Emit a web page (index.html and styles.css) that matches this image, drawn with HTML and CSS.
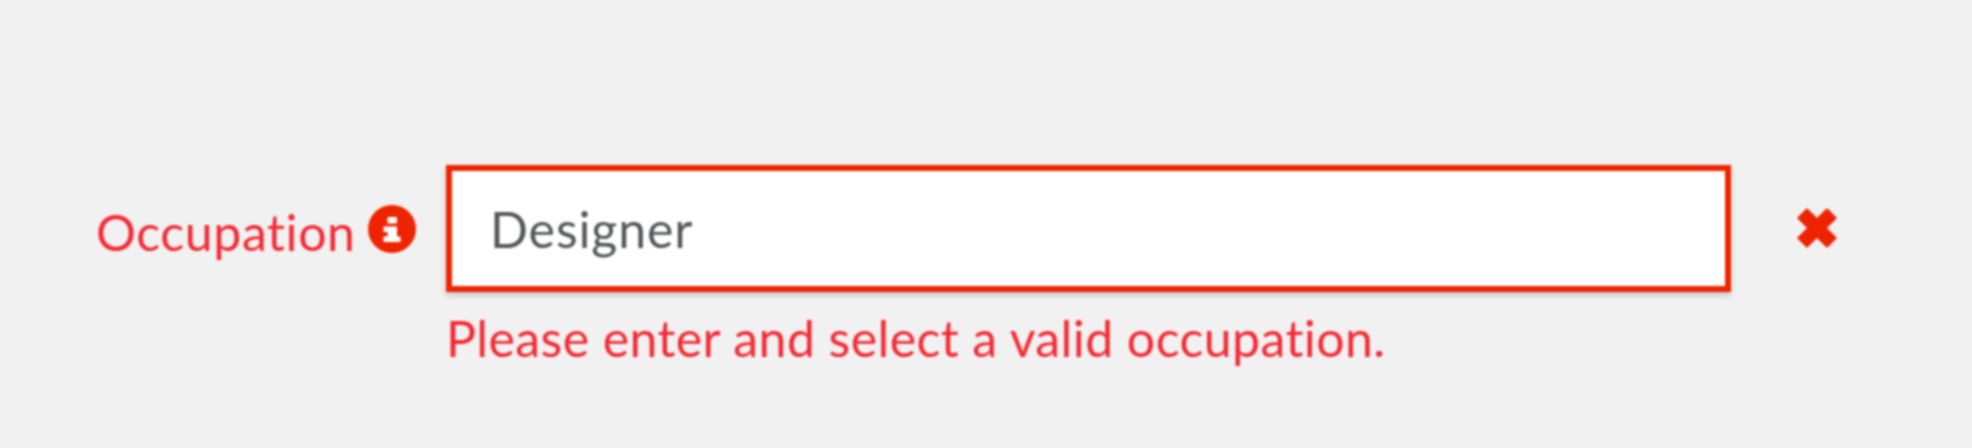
FILE: index.html
```html
<!DOCTYPE html>
<html lang="en">
<head>
  <meta charset="UTF-8" />
  <title>Occupation field</title>
  <link rel="stylesheet" href="styles.css">
</head>
<body>

  <div class="form-row">
    <label class="field-label" for="occupation">
      <span class="label-text">Occupation</span>
      <svg class="info-icon" viewBox="0 0 48 48" aria-hidden="true">
        <circle cx="24" cy="24" r="24" fill="#ee2400" />
        <rect x="19.5" y="12" width="9.5" height="6.5" rx="1" fill="#fff" />
        <path d="M15.5 21.5H29V31.5H32.5V37H15.5V31.5H19.5V27H15.5z" fill="#fff" />
      </svg>
    </label>
    <div class="field">
      <input class="field-input" id="occupation" type="text" value="Designer">
      <div class="field-error">Please enter and select a valid occupation.</div>
    </div>
    <svg class="clear-icon" viewBox="0 0 40 40" aria-hidden="true">
      <path d="M10 2L20 12L30 2L38 10L28 20L38 30L30 38L20 28L10 38L2 30L12 20L2 10z" fill="#ee2400" stroke="#ee2400" stroke-width="3" stroke-linejoin="round" />
    </svg>
  </div>

</body>
</html>
```

FILE: styles.css
```css
body {
  margin: 0;
  height: 448px;
  overflow: hidden;
  background: #f1f1f1;
  font-family: 'Lato', sans-serif;
  font-variant-ligatures: none;
}

.form-row {
  display: flex;
  align-items: flex-start;
  padding: 165px 0 0 96px;
  filter: blur(0.9px);
}

.field-label {
  display: flex;
  align-items: center;
  justify-content: space-between;
  width: 320px;
  height: 127px;
  margin-right: 30px;
  font-size: 50px;
  letter-spacing: 0.6px;
  color: #f32a34;
}

.label-text {
  padding-top: 6px;
}

.info-icon {
  width: 48px;
  height: 48px;
}

.field {
  width: 1285px;
}

.field-input {
  display: block;
  box-sizing: border-box;
  width: 100%;
  height: 127px;
  padding: 0 38px;
  border: 6px solid #ee2400;
  border-radius: 0;
  outline: none;
  background: #fff;
  box-shadow: 0 3px 6px rgba(0, 0, 0, 0.2);
  font-family: inherit;
  font-size: 50px;
  letter-spacing: 0.9px;
  font-variant-ligatures: none;
  color: #54575b;
}

.field-error {
  margin-top: 18px;
  font-size: 50px;
  line-height: 56px;
  letter-spacing: 0.42px;
  color: #f32a34;
}

.clear-icon {
  width: 40px;
  height: 40px;
  margin: 43px 0 0 66px;
}
```
